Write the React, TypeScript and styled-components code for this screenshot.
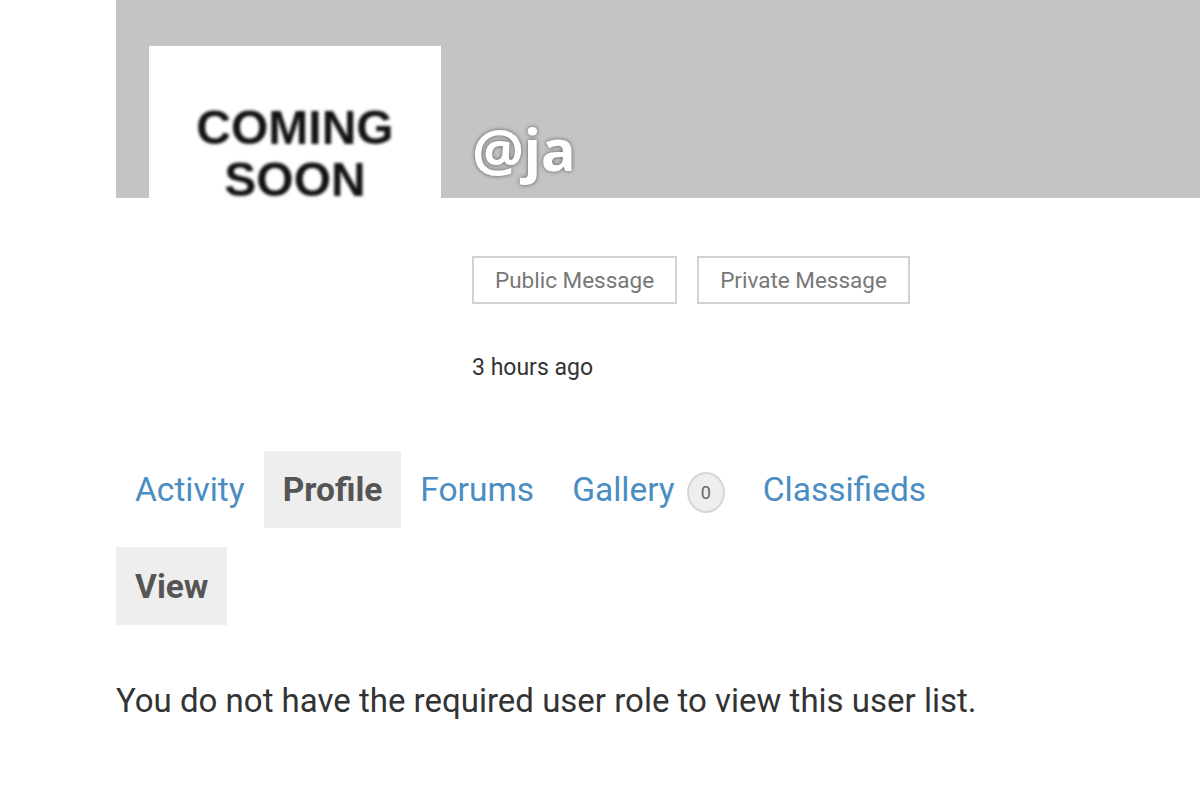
import React from "react";
import styled, { createGlobalStyle } from "styled-components";

const GlobalStyle = createGlobalStyle`
  body {
    margin: 0;
    background: #fff;
    font-family: Roboto, "Liberation Sans", sans-serif;
    color: #333;
  }
`;

const tabs = [
  { label: "Activity" },
  { label: "Profile", current: true },
  { label: "Forums" },
  { label: "Gallery", count: 0 },
  { label: "Classifieds" },
];

const Page = styled.div`
  margin-left: 116px;
  padding-bottom: 60px;
`;

const Header = styled.div`
  display: flex;
  align-items: flex-start;
  gap: 31px;
  padding: 46px 0 0 33px;
  background: linear-gradient(#c4c4c4 0, #c4c4c4 198px, transparent 198px);
`;

const Avatar = styled.div`
  width: 292px;
  height: 292px;
  flex-shrink: 0;
  background: #fff;
  display: flex;
  justify-content: center;
  padding-top: 56px;
  box-sizing: border-box;
`;

const AvatarText = styled.div`
  font-family: "Liberation Sans", Arial, sans-serif;
  font-weight: 700;
  font-size: 48px;
  line-height: 52px;
  text-align: center;
  color: #111;
  filter: blur(1.4px);
`;

const Meta = styled.div`
  display: flex;
  flex-direction: column;
`;

const Handle = styled.h1`
  margin: 68px 0 0;
  font-family: "Open Sans", sans-serif;
  font-weight: 700;
  font-size: 58px;
  line-height: 70px;
  letter-spacing: -0.5px;
  color: #fff;
  text-shadow: 0 0 4px rgba(0, 0, 0, 0.55);
`;

const Actions = styled.div`
  display: flex;
  gap: 20px;
  margin-top: 72px;
`;

const ActionButton = styled.button`
  height: 48px;
  padding: 0 21px;
  background: #fff;
  border: 2px solid #d2d2d2;
  font-family: Roboto, sans-serif;
  font-size: 22.5px;
  color: #777;
`;

const LastActive = styled.div`
  margin-top: 50px;
  font-size: 23px;
  line-height: 27px;
  color: #333;
`;

const Nav = styled.nav`
  display: flex;
  align-items: center;
  margin-top: 70px;
`;

const Tab = styled.a<{ $current?: boolean }>`
  display: flex;
  align-items: center;
  gap: 12px;
  height: 77px;
  padding: 0 19px;
  font-size: 33.5px;
  text-decoration: none;
  color: ${(p) => (p.$current ? "#555" : "#4a8dc3")};
  font-weight: ${(p) => (p.$current ? 700 : 400)};
  background: ${(p) => (p.$current ? "#eee" : "transparent")};
`;

const Count = styled.span`
  width: 38px;
  height: 41px;
  border-radius: 50%;
  border: 2px solid #d6d6d6;
  background: #eee;
  color: #666;
  font-size: 18px;
  display: flex;
  align-items: center;
  justify-content: center;
  box-sizing: border-box;
  margin-top: 6px;
`;

const SubNav = styled.div`
  display: flex;
  margin-top: 19px;
`;

const SubTab = styled.a`
  display: flex;
  align-items: center;
  height: 78px;
  padding: 0 19px;
  background: #eee;
  color: #555;
  font-weight: 700;
  font-size: 33.5px;
`;

const Notice = styled.p`
  margin: 56px 0 0;
  font-size: 33px;
  color: #333;
`;

export default function App() {
  return (
    <>
      <GlobalStyle />
      <Page>
        <Header>
          <Avatar>
            <AvatarText>
              COMING
              <br />
              SOON
            </AvatarText>
          </Avatar>
          <Meta>
            <Handle>@ja</Handle>
            <Actions>
              <ActionButton>Public Message</ActionButton>
              <ActionButton>Private Message</ActionButton>
            </Actions>
            <LastActive>3 hours ago</LastActive>
          </Meta>
        </Header>
        <Nav>
          {tabs.map((t) => (
            <Tab key={t.label} $current={t.current}>
              {t.label}
              {t.count !== undefined && <Count>{t.count}</Count>}
            </Tab>
          ))}
        </Nav>
        <SubNav>
          <SubTab>View</SubTab>
        </SubNav>
        <Notice>You do not have the required user role to view this user list.</Notice>
      </Page>
    </>
  );
}
